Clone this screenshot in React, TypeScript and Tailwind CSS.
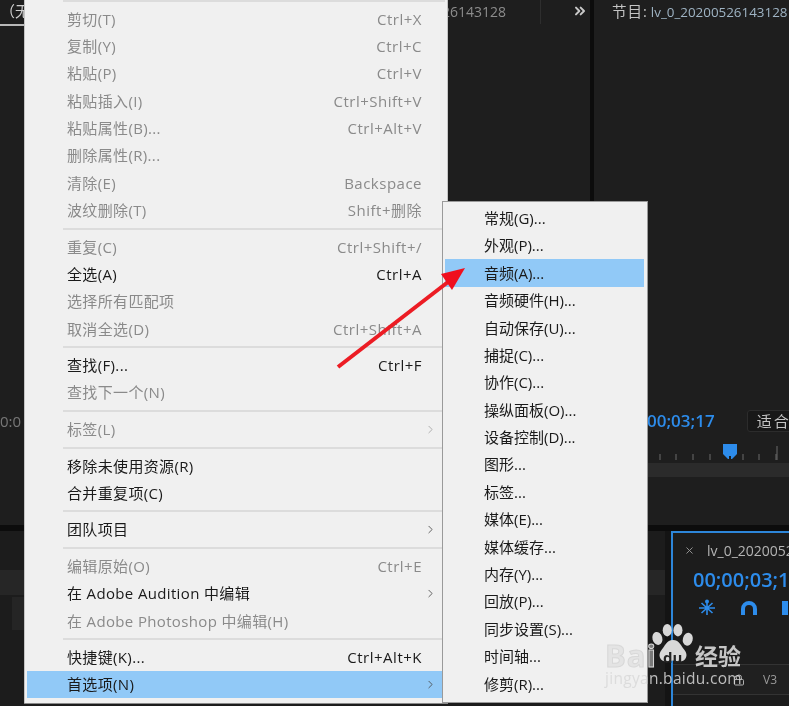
import { ChevronRight, ChevronsRight, Lock, X } from 'lucide-react';

type Item =
  | { sep: true }
  | { label: string; keys?: string; off?: boolean; sub?: boolean; active?: boolean };

const mainMenu: Item[] = [
  { sep: true },
  { label: '剪切(T)', keys: 'Ctrl+X', off: true },
  { label: '复制(Y)', keys: 'Ctrl+C', off: true },
  { label: '粘贴(P)', keys: 'Ctrl+V', off: true },
  { label: '粘贴插入(I)', keys: 'Ctrl+Shift+V', off: true },
  { label: '粘贴属性(B)...', keys: 'Ctrl+Alt+V', off: true },
  { label: '删除属性(R)...', off: true },
  { label: '清除(E)', keys: 'Backspace', off: true },
  { label: '波纹删除(T)', keys: 'Shift+删除', off: true },
  { sep: true },
  { label: '重复(C)', keys: 'Ctrl+Shift+/', off: true },
  { label: '全选(A)', keys: 'Ctrl+A' },
  { label: '选择所有匹配项', off: true },
  { label: '取消全选(D)', keys: 'Ctrl+Shift+A', off: true },
  { sep: true },
  { label: '查找(F)...', keys: 'Ctrl+F' },
  { label: '查找下一个(N)', off: true },
  { sep: true },
  { label: '标签(L)', off: true, sub: true },
  { sep: true },
  { label: '移除未使用资源(R)' },
  { label: '合并重复项(C)' },
  { sep: true },
  { label: '团队项目', sub: true },
  { sep: true },
  { label: '编辑原始(O)', keys: 'Ctrl+E', off: true },
  { label: '在 Adobe Audition 中编辑', sub: true },
  { label: '在 Adobe Photoshop 中编辑(H)', off: true },
  { sep: true },
  { label: '快捷键(K)...', keys: 'Ctrl+Alt+K' },
  { label: '首选项(N)', sub: true, active: true },
];

const prefs = [
  '常规(G)...', '外观(P)...', '音频(A)...', '音频硬件(H)...', '自动保存(U)...', '捕捉(C)...', '协作(C)...',
  '操纵面板(O)...', '设备控制(D)...', '图形...', '标签...', '媒体(E)...', '媒体缓存...', '内存(Y)...',
  '回放(P)...', '同步设置(S)...', '时间轴...', '修剪(R)...',
];

function MenuRow({ item }: { item: Item }) {
  if ('sep' in item) {
    return (
      <div className="h-[9.2px] flex items-center pl-[38px] pr-[2px]">
        <div className="h-[2px] w-full bg-[#dcdcdc]" />
      </div>
    );
  }
  return (
    <div
      className={`h-[27.35px] flex items-center pr-[25px] relative ${item.active ? 'bg-[#91c9f7] ml-[2px] pl-[40px]' : 'pl-[42px]'} ${item.off ? 'text-[#8a8a8a]' : 'text-[#1a1a1a]'}`}
    >
      <span className="flex-1 whitespace-nowrap">{item.label}</span>
      {item.keys && <span className="whitespace-nowrap tracking-[0.5px]">{item.keys}</span>}
      {item.sub && (
        <ChevronRight
          size={13}
          strokeWidth={1.5}
          className={`absolute right-[10px] ${item.off ? 'text-[#a0a0a0]' : 'text-[#444444]'}`}
        />
      )}
    </div>
  );
}

function Ruler() {
  const ticks = [13, 29, 46, 63, 96, 112, 129];
  return (
    <svg width="142" height="18" viewBox="0 0 142 18" className="block ml-[53px]">
      {ticks.map((x) => (
        <path key={x} d={`M${x} 10v6`} stroke="#6a6a6a" strokeWidth="1" />
      ))}
      <path d="M130 2v14" stroke="#6a6a6a" strokeWidth="1" />
      <path d="M76 0h14v10l-5 5h-1v-3h-2v3h-1l-5-5z" fill="#2d8ceb" />
    </svg>
  );
}

function SnapIcon() {
  return (
    <svg width="18" height="18" viewBox="0 0 18 18" fill="none" stroke="#2d8ceb" strokeWidth="1.6">
      <path d="M9 2v14M1 9h16M3.5 4l11 10M14.5 4l-11 10" />
      <circle cx="9" cy="2.5" r="2" fill="#2d8ceb" stroke="none" />
    </svg>
  );
}

function MagnetIcon() {
  return (
    <svg width="18" height="16" viewBox="0 0 18 16" fill="none">
      <path d="M3 15V9a6 6 0 0 1 12 0v6" stroke="#2d8ceb" strokeWidth="4" />
    </svg>
  );
}

export default function App() {
  return (
    <div className="relative w-[789px] h-[706px] overflow-hidden flex flex-col bg-[#1e1e1e] font-['Open_Sans','Noto_Sans_CJK_SC',sans-serif] text-[15px] blur-[0.35px]">
      {/* Premiere panels behind the menu */}
      <div className="h-[525px] flex shrink-0">
        <div className="w-[590px] flex flex-col">
          <div className="h-[26px] flex items-start pr-[2px] text-[#8c8c8c]">
            <div className="w-[24px] h-[26px] border-b-2 border-[#b8b8b8] text-[#cfcfcf] leading-[22px] whitespace-nowrap">（无</div>
            <div className="flex-1 text-right text-[14px] leading-[24px] whitespace-nowrap">lv_0_20200526143128</div>
            <div className="w-[35px] h-[24px] border-r border-[#2e2e2e]" />
            <ChevronsRight size={16} strokeWidth={3} className="ml-[31px] mt-[3px] text-[#c8c8c8]" />
          </div>
          <div className="flex-1 flex items-end pb-[94px] text-[#777777] leading-[20px]">0:0</div>
        </div>
        <div className="w-[4px] bg-[#0c0c0c]" />
        <div className="flex-1 flex flex-col min-w-0 overflow-hidden">
          <div className="h-[26px] pl-[18px] text-[14.5px] leading-[24px] whitespace-nowrap text-[#c4c4c4]">
            <span className="tracking-[1px] mr-[3px]">节目:</span>
            <span className="text-[13.4px] text-[#9fb4c4]">lv_0_20200526143128</span>
          </div>
          <div className="flex-1 flex items-end pl-[53px] pb-[2px] gap-[32px]">
            <span className="text-[17px] font-semibold text-[#2d8ceb] leading-[22px]">00;03;17</span>
            <span className="h-[22px] w-[60px] shrink-0 rounded-[3px] border border-[#2c2c2c] bg-[#181818] text-[#c4c4c4] pl-[9px] leading-[20px] tracking-[2px] whitespace-nowrap">适合</span>
          </div>
          <div className="h-[14px] mt-[10px]">
            <Ruler />
          </div>
          <div className="h-[14px] mt-[5px] mb-[48px] bg-[#2b2b2b]" />
        </div>
      </div>
      <div className="h-[6px] shrink-0 bg-[#0c0c0c]" />

      <div className="flex-1 flex min-h-0">
        <div className="w-[665px] flex flex-col bg-[#1c1c1c]">
          <div className="h-[39px]" />
          <div className="h-[25px] bg-[#262626]" />
          <div className="flex">
            <div className="w-[12px] h-[33px] mt-[2px]" />
            <div className="w-[12px] h-[33px] mt-[2px] bg-[#252525]" />
          </div>
        </div>
        <div className="w-[6px] bg-[#141414]" />
        <div className="flex-1 min-w-0 overflow-hidden border-l-2 border-t-2 border-[#2d86d9] flex flex-col bg-[#1c1c1c]">
          <div className="h-[34px] flex items-center pl-[11px] gap-[12px] text-[14px] text-[#b4b4b4] whitespace-nowrap">
            <X size={11} className="text-[#9a9a9a] shrink-0" />
            <span>lv_0_2020052</span>
          </div>
          <div className="h-[27px] pl-[20px] text-[20px] font-semibold leading-[26px] text-[#2d8ceb] whitespace-nowrap">00;00;03;1</div>
          <div className="h-[28px] flex items-center pl-[25px] gap-[24px]">
            <SnapIcon />
            <MagnetIcon />
            <div className="w-[6px] h-[14px] shrink-0 bg-[#2d8ceb]" />
          </div>
          <div className="h-[42px]" />
          <div className="h-[31px] border-y border-[#333333] bg-[#202020] flex items-center pl-[60px] gap-[18px] text-[12px] text-[#9a9a9a]">
            <Lock size={12} className="text-[#b0b0b0] shrink-0" />
            <span>V3</span>
          </div>
        </div>
      </div>

      {/* Edit menu */}
      <div className="absolute left-[24px] top-0 w-[424px] h-[703px] bg-[#f0f0f0] border-l border-r border-[#c4c4c4] tracking-[0.35px] shadow-[0_1px_0_#8a8a8a]">
        <div className="-mt-[4px]">
          {mainMenu.map((item, i) => (
            <MenuRow key={i} item={item} />
          ))}
        </div>
      </div>

      {/* Preferences submenu */}
      <div className="absolute left-[442px] top-[201px] w-[206px] h-[502px] bg-[#f0f0f0] border border-[#9a9a9a] pt-[2.5px] pl-[2px] pr-[3px] text-[#1a1a1a]">
        {prefs.map((label, i) => (
          <div
            key={label}
            className={`h-[27.4px] flex items-center pl-[39px] whitespace-nowrap ${i === 2 ? 'bg-[#91c9f7]' : ''}`}
          >
            {label}
          </div>
        ))}
      </div>

      {/* Annotation arrow */}
      <svg className="absolute left-0 top-0 pointer-events-none" width="789" height="706" viewBox="0 0 789 706">
        <path d="M338 367L448 282" stroke="#ec1c24" strokeWidth="4" fill="none" />
        <path d="M465 268L441 274L452 290Z" fill="#f00f1e" />
      </svg>

      {/* Watermark */}
      <svg className="absolute left-[650px] top-[621px] text-[#d8d8d8]" width="46" height="48" viewBox="0 0 56 52" fill="currentColor">
        <ellipse cx="9" cy="18" rx="6" ry="8" transform="rotate(-15 9 18)" />
        <ellipse cx="21" cy="8" rx="5.5" ry="7.5" />
        <ellipse cx="34" cy="8" rx="5.5" ry="7.5" />
        <ellipse cx="46" cy="19" rx="6" ry="8" transform="rotate(15 46 19)" />
        <path d="M28 20c8 0 10 8 14 12 5 6 2 14-6 14-3 0-5-1-8-1s-5 1-8 1c-8 0-11-8-6-14 4-4 6-12 14-12z" />
      </svg>
      <div className="absolute left-[605px] top-[637px] text-[31px] font-bold leading-[36px] text-[#d8d8d8]/50 [-webkit-text-stroke:1px_#d8d8d8] tracking-[1px]">Bai</div>
      <div className="absolute left-[663px] top-[648px] text-[15px] font-bold leading-[18px] text-[#222222]">du</div>
      <div className="absolute left-[695px] top-[642px] text-[23px] font-bold leading-[28px] text-[#d8d8d8]/90">经验</div>
      <div className="absolute left-[605px] top-[668px] text-[15.5px] leading-[20px] text-[#d8d8d8]/85 tracking-[0.3px] whitespace-nowrap">jingyan.baidu.com</div>
    </div>
  );
}
